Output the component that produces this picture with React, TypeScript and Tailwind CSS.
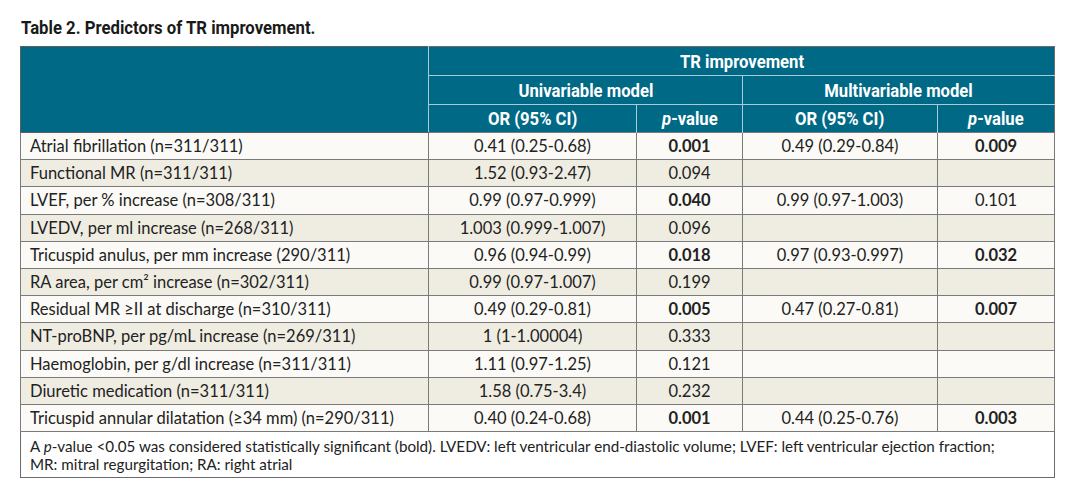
import React from "react";

type Row = {
  label: React.ReactNode;
  uOr: string;
  uP: string;
  uSig?: boolean;
  mOr?: string;
  mP?: string;
  mSig?: boolean;
};

const rows: Row[] = [
  { label: "Atrial fibrillation (n=311/311)", uOr: "0.41 (0.25-0.68)", uP: "0.001", uSig: true, mOr: "0.49 (0.29-0.84)", mP: "0.009", mSig: true },
  { label: "Functional MR (n=311/311)", uOr: "1.52 (0.93-2.47)", uP: "0.094" },
  { label: "LVEF, per % increase (n=308/311)", uOr: "0.99 (0.97-0.999)", uP: "0.040", uSig: true, mOr: "0.99 (0.97-1.003)", mP: "0.101" },
  { label: "LVEDV, per ml increase (n=268/311)", uOr: "1.003 (0.999-1.007)", uP: "0.096" },
  { label: "Tricuspid anulus, per mm increase (290/311)", uOr: "0.96 (0.94-0.99)", uP: "0.018", uSig: true, mOr: "0.97 (0.93-0.997)", mP: "0.032", mSig: true },
  { label: "RA area, per cm² increase (n=302/311)", uOr: "0.99 (0.97-1.007)", uP: "0.199" },
  { label: "Residual MR ≥II at discharge (n=310/311)", uOr: "0.49 (0.29-0.81)", uP: "0.005", uSig: true, mOr: "0.47 (0.27-0.81)", mP: "0.007", mSig: true },
  { label: "NT-proBNP, per pg/mL increase (n=269/311)", uOr: "1 (1-1.00004)", uP: "0.333" },
  { label: "Haemoglobin, per g/dl increase (n=311/311)", uOr: "1.11 (0.97-1.25)", uP: "0.121" },
  { label: "Diuretic medication (n=311/311)", uOr: "1.58 (0.75-3.4)", uP: "0.232" },
  { label: "Tricuspid annular dilatation (≥34 mm) (n=290/311)", uOr: "0.40 (0.24-0.68)", uP: "0.001", uSig: true, mOr: "0.44 (0.25-0.76)", mP: "0.003", mSig: true },
];

// no condensed face installed, so the heading face is squeezed
function Cond({ children, left, sx = "scale-x-[0.9]" }: { children: React.ReactNode; left?: boolean; sx?: string }) {
  return (
    <span
      className={`inline-block whitespace-nowrap font-['Roboto',sans-serif] font-bold ${sx} ${
        left ? "origin-left" : "origin-center"
      }`}
    >
      {children}
    </span>
  );
}

export default function App() {
  return (
    <div className="w-[1076px] h-[498px] bg-white pt-[15px] pl-[20px]">
      <h1 className="text-[19px] leading-[24px] text-[#1a1a1a] pl-[1px]">
        <Cond left sx="scale-x-[0.88]">Table 2. Predictors of TR improvement.</Cond>
      </h1>
      <table className="mt-[6px] border-collapse table-fixed w-[1034px] font-['Lato',sans-serif] text-[16.5px] leading-[20px] text-[#222] border border-[#6b6b6b]">
        <colgroup>
          <col className="w-[408px]" />
          <col className="w-[208px]" />
          <col className="w-[106px]" />
          <col className="w-[195px]" />
          <col className="w-[117px]" />
        </colgroup>
        <thead className="text-white text-[18.5px] leading-[20px] bg-[#006985]">
          <tr className="h-[29px]">
            <th rowSpan={3} className="border border-[#5f5f5f] border-r-[#a9cbd6]"></th>
            <th colSpan={4} className="border-b border-[#a9cbd6]">
              <Cond>TR improvement</Cond>
            </th>
          </tr>
          <tr className="h-[29px]">
            <th colSpan={2} className="border-b border-r border-[#a9cbd6]">
              <Cond>Univariable model</Cond>
            </th>
            <th colSpan={2} className="border-b border-[#a9cbd6]">
              <Cond>Multivariable model</Cond>
            </th>
          </tr>
          <tr className="h-[28px]">
            <th className="border-r border-[#a9cbd6]">
              <Cond>OR (95% CI)</Cond>
            </th>
            <th className="border-r border-[#a9cbd6]">
              <Cond>
                <i>p</i>-value
              </Cond>
            </th>
            <th className="border-r border-[#a9cbd6]">
              <Cond>OR (95% CI)</Cond>
            </th>
            <th>
              <Cond>
                <i>p</i>-value
              </Cond>
            </th>
          </tr>
        </thead>
        <tbody>
          {rows.map((r, i) => (
            <tr key={i} className={`h-[27.2px] ${i % 2 === 0 ? "bg-[#fbfaf6]" : "bg-[#efede2]"}`}>
              <td className="border border-[#7a7a7a] pl-[9px] whitespace-nowrap">{r.label}</td>
              <td className="border border-[#7a7a7a] text-center">{r.uOr}</td>
              <td className={`border border-[#7a7a7a] text-center ${r.uSig ? "font-bold" : ""}`}>{r.uP}</td>
              <td className="border border-[#7a7a7a] text-center">{r.mOr ?? ""}</td>
              <td className={`border border-[#7a7a7a] text-center ${r.mSig ? "font-bold" : ""}`}>{r.mP ?? ""}</td>
            </tr>
          ))}
          <tr className="h-[46px] bg-white">
            <td colSpan={5} className="border border-[#6b6b6b] pl-[9px] pr-[45px] text-[15.2px] leading-[18px] align-middle">
              A <i>p</i>-value &lt;0.05 was considered statistically significant (bold). LVEDV: left ventricular end-diastolic volume; LVEF: left ventricular ejection fraction; MR: mitral regurgitation; RA: right atrial
            </td>
          </tr>
        </tbody>
      </table>
    </div>
  );
}
